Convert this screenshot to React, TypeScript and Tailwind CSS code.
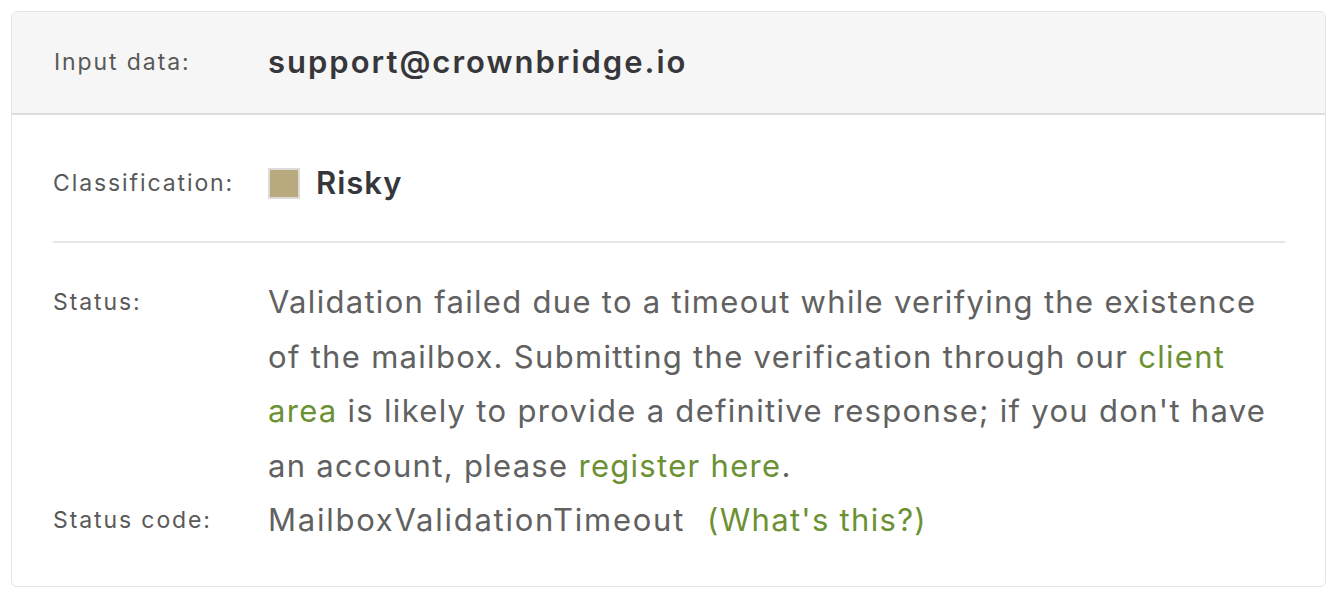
import React from "react";

const green = "text-[#6c9133]";
const label = "text-[23px] text-[#595959] tracking-[1.9px]";
const body = "text-[31px] text-[#616161] tracking-[1.3px]";

export default function App() {
  return (
    <div className="w-[1332px] h-[592px] bg-white pt-[11px] pl-[11px] font-['Inter',sans-serif]">
      <div className="w-[1315px] h-[576px] rounded-[6px] border border-[#e4e4e4] overflow-hidden flex flex-col">
        <div className="h-[103px] bg-[#f6f6f6] border-b-2 border-[#dedede] flex items-center pl-[42px]">
          <div className={`w-[214px] ${label}`}>Input data:</div>
          <div className="text-[31px] font-semibold text-[#37373b] tracking-[2px]">support@crownbridge.io</div>
        </div>
        <div className="px-[41px] flex flex-col">
          <div className="pt-[50px] pb-[40px] flex items-center h-[126px]">
            <div className={`w-[215px] ${label}`}>Classification:</div>
            <div className="flex items-center gap-[16px]">
              <div className="w-[32px] h-[31px] bg-[#b8aa7d] border-2 border-[#dcdcdc]" />
              <div className="text-[31px] font-semibold text-[#37373b] tracking-[1px] leading-[36px]">Risky</div>
            </div>
          </div>
          <div className="h-[2px] bg-[#e6e6e6] mr-[-1px]" />
          <div className="pt-[32px] grid grid-cols-[215px_1fr] leading-[54.5px]">
            <div className={label}>Status:</div>
            <div className={body}>
              Validation failed due to a timeout while verifying the existence<br />
              of the mailbox. Submitting the verification through our <span className={green}>client</span><br />
              <span className={green}>area</span> is likely to provide a definitive response; if you don't have<br />
              an account, please <span className={green}>register here</span>.
            </div>
            <div className={label}>Status code:</div>
            <div className={body}>
              <span className="tracking-[1.75px]">MailboxValidationTimeout</span>
              <span className={`${green} ml-[22px]`}>(What's this?)</span>
            </div>
          </div>
        </div>
      </div>
    </div>
  );
}
